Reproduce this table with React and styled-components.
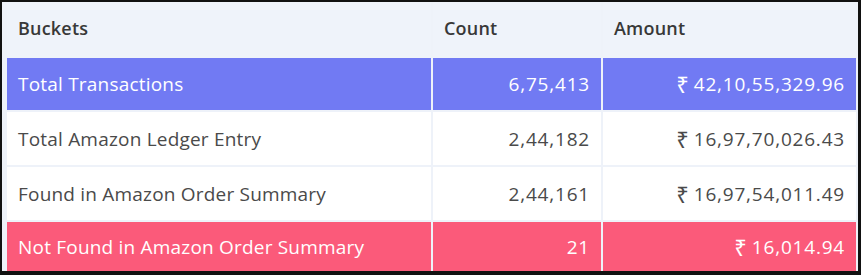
import React from 'react';
import styled, { createGlobalStyle } from 'styled-components';

const GlobalStyle = createGlobalStyle`
  html, body {
    margin: 0;
    padding: 0;
    background: #ffffff;
  }
  body {
    font-family: 'Open Sans', 'Noto Sans', 'DejaVu Sans', sans-serif;
  }
`;

const colors = {
  frame: '#111111',
  line: '#eef2f9',
  head: '#eff3fa',
  purple: '#717af3',
  pink: '#fb5a7a',
  text: '#4a4a4a',
  headText: '#383838',
  white: '#ffffff',
};

const rows = [
  { bucket: 'Total Transactions', count: '6,75,413', amount: '42,10,55,329.96', tone: 'purple', height: 52 },
  { bucket: 'Total Amazon Ledger Entry', count: '2,44,182', amount: '16,97,70,026.43', tone: 'plain', height: 53 },
  { bucket: 'Found in Amazon Order Summary', count: '2,44,161', amount: '16,97,54,011.49', tone: 'plain', height: 53 },
  { bucket: 'Not Found in Amazon Order Summary', count: '21', amount: '16,014.94', tone: 'pink', height: 49 },
];

const StyledFrame = styled.div`
  width: 861px;
  height: 275px;
  box-sizing: border-box;
  border-style: solid;
  border-color: ${colors.frame};
  border-width: 2px 3px 4px 2px;
  background-color: ${colors.line};
  padding: 0 2px 0 5px;
  overflow: hidden;
`;

const StyledTable = styled.div`
  display: grid;
  grid-template-columns: 424px 168px 253px;
  column-gap: 2px;
  row-gap: 2px;
`;

const StyledHeadCell = styled.div`
  height: 56px;
  margin-bottom: -2px;
  box-sizing: border-box;
  display: flex;
  align-items: center;
  padding: 0 12px 4px 11px;
  background-color: ${colors.head};
  color: ${colors.headText};
  font-size: 18px;
  font-weight: 600;
  letter-spacing: 0.2px;
`;

const toneBg = { purple: colors.purple, pink: colors.pink, plain: colors.white };

const StyledCell = styled.div`
  height: ${(props) => props.h}px;
  box-sizing: border-box;
  display: flex;
  align-items: center;
  justify-content: ${(props) => (props.right ? 'flex-end' : 'flex-start')};
  padding: 0 11px 0 11px;
  background-color: ${(props) => toneBg[props.tone]};
  color: ${(props) => (props.tone === 'plain' ? colors.text : colors.white)};
  font-size: 19px;
  font-weight: 400;
  letter-spacing: ${(props) => (props.right ? '0.8px' : '0.2px')};
  white-space: nowrap;
`;

const StyledRupee = styled.span`
  font-size: 22px;
  line-height: 1;
  margin-right: 5px;
  letter-spacing: 0;
`;

const App = () => {
  return (
    <>
      <GlobalStyle />
      <StyledFrame>
        <StyledTable>
          <StyledHeadCell>Buckets</StyledHeadCell>
          <StyledHeadCell>Count</StyledHeadCell>
          <StyledHeadCell>Amount</StyledHeadCell>
          {rows.map((row) => (
            <React.Fragment key={row.bucket}>
              <StyledCell tone={row.tone} h={row.height}>
                {row.bucket}
              </StyledCell>
              <StyledCell tone={row.tone} h={row.height} right>
                {row.count}
              </StyledCell>
              <StyledCell tone={row.tone} h={row.height} right>
                <StyledRupee>₹</StyledRupee>
                {row.amount}
              </StyledCell>
            </React.Fragment>
          ))}
        </StyledTable>
      </StyledFrame>
    </>
  );
};

export default App;
